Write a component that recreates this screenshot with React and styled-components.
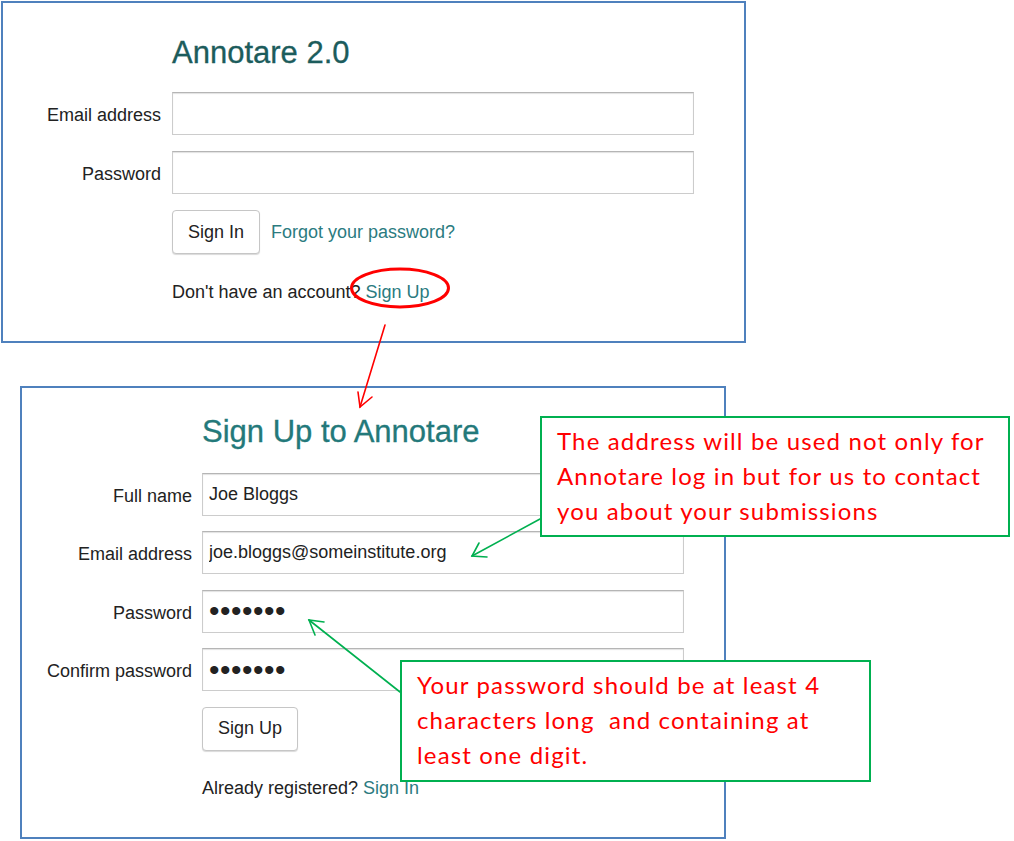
import React from "react";
import styled, { createGlobalStyle } from "styled-components";

const GlobalStyle = createGlobalStyle`
  body {
    margin: 0;
    background: #fff;
  }
  * {
    box-sizing: border-box;
  }
`;

const Canvas = styled.div`
  position: relative;
  width: 1014px;
  height: 841px;
  overflow: hidden;
  background: #fff;
  display: flex;
  flex-direction: column;
  align-items: flex-start;
  font-family: "Liberation Sans", Arial, sans-serif;
`;

const Panel = styled.section`
  width: ${(p) => p.$w}px;
  height: ${(p) => p.$h}px;
  margin: ${(p) => p.$mt}px 0 0 ${(p) => p.$ml}px;
  border: 2px solid #4f81bd;
  background: #fff;
`;

const Form = styled.div`
  display: grid;
  grid-template-columns: ${(p) => p.$label}px ${(p) => p.$input}px;
  column-gap: ${(p) => p.$gap}px;
  row-gap: ${(p) => p.$row}px;
  align-items: center;
  padding-top: ${(p) => p.$pt}px;
`;

const Title = styled.h1`
  grid-column: 2;
  margin: 0 0 ${(p) => p.$mb}px;
  font-size: 31px;
  line-height: 31px;
  font-weight: normal;
  color: ${(p) => p.$color};
  -webkit-text-stroke: 0.3px ${(p) => p.$color};
`;

const Label = styled.label`
  text-align: right;
  font-size: 18px;
  color: #222;
  transform: translateY(2px);
`;

const Field = styled.input`
  width: 100%;
  height: 43px;
  padding: 0 6px;
  border: 1px solid #ccc;
  border-top-color: #b5b5b5;
  box-shadow: inset 0 1px 1px rgba(0, 0, 0, 0.12);
  background: #fff;
  color: #222;
  font-family: "Liberation Sans", Arial, sans-serif;
  font-size: ${(p) => (p.$dots ? 30 : 18)}px;
  letter-spacing: ${(p) => (p.$dots ? 0.5 : 0)}px;
  outline: none;
`;

const Actions = styled.div`
  grid-column: 2;
  display: flex;
  align-items: center;
  gap: 11px;
`;

const Button = styled.button`
  height: 44px;
  padding: 0 15px;
  background: #fff;
  border: 1px solid #c6c6c6;
  border-radius: 4px;
  box-shadow: 0 1px 1px rgba(0, 0, 0, 0.15);
  color: #222;
  font-family: "Liberation Sans", Arial, sans-serif;
  font-size: 18px;
`;

const Link = styled.a`
  color: #2b7b7f;
  text-decoration: none;
  font-size: 18px;
`;

const Note = styled.p`
  grid-column: 2;
  margin: 12px 0 0;
  font-size: 18px;
  line-height: 20px;
  color: #222;
`;

const Callout = styled.div`
  position: absolute;
  left: ${(p) => p.$x}px;
  top: ${(p) => p.$y}px;
  width: ${(p) => p.$w}px;
  height: ${(p) => p.$h}px;
  padding: 5px 4px 0 15px;
  border: 2px solid #00b050;
  background: #fff;
  color: #ff0000;
  font-family: Lato, "Open Sans", sans-serif;
  font-size: 24px;
  letter-spacing: 1.15px;
  line-height: 35px;
  white-space: nowrap;
`;

const Overlay = styled.svg`
  position: absolute;
  left: 0;
  top: 0;
  pointer-events: none;
`;

const Arrow = ({ from, tip, barbs, color }) => (
  <g stroke={color} strokeWidth="1.6" fill="none" strokeLinecap="round">
    <line x1={from[0]} y1={from[1]} x2={tip[0]} y2={tip[1]} />
    <polyline points={`${barbs[0][0]},${barbs[0][1]} ${tip[0]},${tip[1]} ${barbs[1][0]},${barbs[1][1]}`} />
  </g>
);

export default function App() {
  return (
    <>
      <GlobalStyle />
      <Canvas>
        <Panel $w={745} $h={342} $mt={1} $ml={1}>
          <Form $label={158} $input={522} $gap={11} $row={16} $pt={33.5}>
            <Title $mb={8.5} $color="#1c5c5c">Annotare 2.0</Title>
            <Label>Email address</Label>
            <Field type="text" readOnly value="" />
            <Label>Password</Label>
            <Field type="text" readOnly value="" />
            <Actions>
              <Button>Sign In</Button>
              <Link href="#">Forgot your password?</Link>
            </Actions>
            <Note>
              Don't have an account? <Link href="#">Sign Up</Link>
            </Note>
          </Form>
        </Panel>

        <Panel $w={706} $h={453} $mt={42.5} $ml={20}>
          <Form $label={170} $input={482} $gap={10} $row={15.5} $pt={28}>
            <Title $mb={10.5} $color="#23797a">Sign Up to Annotare</Title>
            <Label>Full name</Label>
            <Field type="text" readOnly value="Joe Bloggs" />
            <Label>Email address</Label>
            <Field type="text" readOnly value="joe.bloggs@someinstitute.org" />
            <Label>Password</Label>
            <Field type="text" readOnly $dots value={"\u2022".repeat(7)} />
            <Label>Confirm password</Label>
            <Field type="text" readOnly $dots value={"\u2022".repeat(7)} />
            <Actions>
              <Button>Sign Up</Button>
            </Actions>
            <Note>
              Already registered? <Link href="#">Sign In</Link>
            </Note>
          </Form>
        </Panel>

        <Callout $x={540} $y={416} $w={470} $h={121}>
          The address will be used not only for
          <br />
          Annotare log in but for us to contact
          <br />
          you about your submissions
        </Callout>

        <Callout $x={400} $y={660} $w={471} $h={122}>
          Your password should be at least 4
          <br />
          {"characters long\u00a0 and containing at"}
          <br />
          least one digit.
        </Callout>

        <Overlay width="1014" height="841" viewBox="0 0 1014 841">
          <ellipse cx="400" cy="288" rx="48.5" ry="19" fill="none" stroke="#ff0000" strokeWidth="3" />
          <Arrow color="#ff0000" from={[385, 325]} tip={[360, 407]} barbs={[[358, 392], [372, 397]]} />
          <Arrow color="#00b050" from={[540, 519]} tip={[472, 556]} barbs={[[487, 557], [479, 543]]} />
          <Arrow color="#00b050" from={[400, 692]} tip={[309, 620]} barbs={[[324, 622], [315, 635]]} />
        </Overlay>
      </Canvas>
    </>
  );
}
